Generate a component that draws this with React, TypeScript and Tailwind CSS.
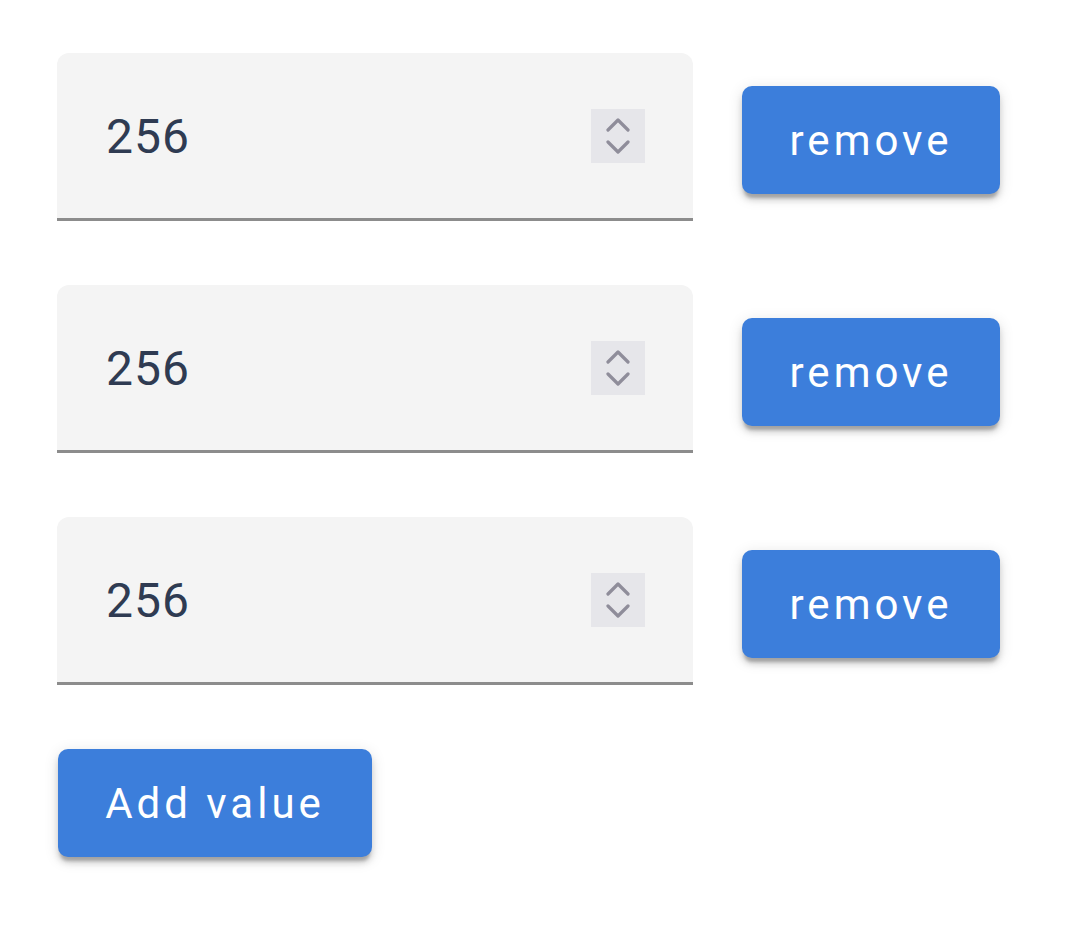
import React, { useState } from 'react';

const font = { fontFamily: 'Roboto, "Liberation Sans", sans-serif' };

const Spinner = () => (
  <div className="flex h-[54px] w-[54px] flex-col items-center justify-center gap-[8px] bg-[#e6e6ea]">
    <svg width="24" height="14" viewBox="0 0 24 14" fill="none">
      <path d="M2 12 L12 2 L22 12" stroke="#8f8d9a" strokeWidth="3.2" strokeLinecap="round" strokeLinejoin="round" />
    </svg>
    <svg width="24" height="14" viewBox="0 0 24 14" fill="none">
      <path d="M2 2 L12 12 L22 2" stroke="#8f8d9a" strokeWidth="3.2" strokeLinecap="round" strokeLinejoin="round" />
    </svg>
  </div>
);

const Btn = ({ text, className = '', onClick }: { text: string; className?: string; onClick?: () => void }) => (
  <button
    onClick={onClick}
    className={`flex h-[108px] items-center justify-center rounded-[10px] bg-[#3c7edb] text-[42px] tracking-[4px] text-white shadow-[0_6px_3px_-2px_rgba(0,0,0,0.2),0_6px_6px_0_rgba(0,0,0,0.14),0_3px_15px_0_rgba(0,0,0,0.12)] ${className}`}
    style={font}
  >
    {text}
  </button>
);

export default function App() {
  const [values, setValues] = useState([256, 256, 256]);

  return (
    <div className="min-h-[936px] w-full bg-white pl-[57px] pt-[53px]" style={font}>
      <div className="flex flex-col gap-[64px]">
        {values.map((v, i) => (
          <div key={i} className="flex items-start gap-[49px]">
            <div className="flex h-[168px] w-[636px] items-center justify-between rounded-t-[12px] border-b-[3px] border-[#8c8c8c] bg-[#f4f4f4] pl-[49px] pr-[48px]">
              <span className="pt-[3px] text-[48px] tracking-[1px] text-[#2f3b52]">{v}</span>
              <Spinner />
            </div>
            <Btn
              text="remove"
              className="mt-[33px] w-[258px]"
              onClick={() => setValues(values.filter((_, j) => j !== i))}
            />
          </div>
        ))}
        <Btn text="Add value" className="w-[314px] ml-px" onClick={() => setValues([...values, 256])} />
      </div>
    </div>
  );
}
